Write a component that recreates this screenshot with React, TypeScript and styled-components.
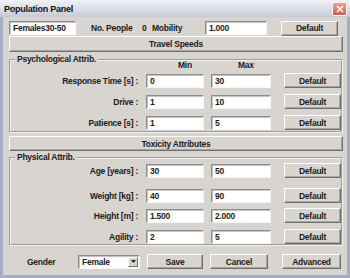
import React from "react";
import styled, { createGlobalStyle } from "styled-components";

const FONT = `"Liberation Sans", Arial, sans-serif`;
const FACE = "#d8d5d0";

const GlobalStyle = createGlobalStyle`
  html, body { margin: 0; padding: 0; background: ${FACE}; }
  body { width: 350px; height: 278px; overflow: hidden; }
  * { box-sizing: border-box; }
`;

const Window = styled.div`
  width: 350px;
  height: 278px;
  display: flex;
  flex-direction: column;
  font-family: ${FONT};
  font-size: 8.5px;
  letter-spacing: -0.25px;
  font-weight: bold;
  color: #1c1c1c;
`;

const TitleBar = styled.div`
  height: 17px;
  display: flex;
  align-items: center;
  justify-content: space-between;
  padding: 0 3px 0 4px;
  background: linear-gradient(#f1f2f6, #d3d7e1 70%, #c3c9d6);
  font-size: 9px;
  color: #111;
`;

const CloseButton = styled.div`
  width: 15px;
  height: 14px;
  border: 1px solid #f4f4f4;
  border-radius: 2px;
  background: linear-gradient(#e8a596, #cf5f49);
  display: flex;
  align-items: center;
  justify-content: center;
`;

const Frame = styled.div`
  flex: 1;
  display: flex;
  flex-direction: column;
  border: 3px solid #a6aec6;
  border-top: 0;
  background: ${FACE};
  padding: 3px 4px 0 6px;
`;

const Row = styled.div<{ $h?: number; $mt?: number }>`
  display: flex;
  align-items: center;
  height: ${(p) => p.$h ?? 15}px;
  margin-top: ${(p) => p.$mt ?? 0}px;
  flex-shrink: 0;
`;

const Text = styled.span<{ $ml?: number; $w?: number }>`
  margin-left: ${(p) => p.$ml ?? 0}px;
  ${(p) => (p.$w ? `width: ${p.$w}px;` : "")}
  white-space: nowrap;
`;

const TextBox = styled.input<{ $w: number; $ml?: number }>`
  width: ${(p) => p.$w}px;
  height: 14px;
  margin: 0 0 0 ${(p) => p.$ml ?? 0}px;
  padding: 0 3px;
  border: 1px solid;
  border-color: #8c8c8c #f6f6f6 #f6f6f6 #8c8c8c;
  box-shadow: inset 1px 1px 0 #c4c4c4;
  background: #fff;
  font-family: ${FONT};
  font-size: 8.5px;
  letter-spacing: -0.25px;
  font-weight: bold;
  color: #1c1c1c;
  outline: none;
`;

const Button = styled.button<{ $w?: number; $ml?: number; $h?: number }>`
  width: ${(p) => (p.$w ? `${p.$w}px` : "100%")};
  height: ${(p) => p.$h ?? 15}px;
  margin: 0 0 0 ${(p) => p.$ml ?? 0}px;
  padding: 0;
  background: ${FACE};
  border: 1px solid;
  border-color: #fdfdfd #6f6f6f #6f6f6f #fdfdfd;
  box-shadow: inset -1px -1px 0 #a9a6a1;
  font-family: ${FONT};
  font-size: 8.5px;
  letter-spacing: -0.25px;
  font-weight: bold;
  color: #1c1c1c;
  flex-shrink: 0;
`;

const Group = styled.fieldset<{ $mt?: number; $pb?: number }>`
  margin: ${(p) => p.$mt ?? 0}px 0 0 0;
  padding: 0 0 ${(p) => p.$pb ?? 0}px 0;
  border: 2px groove #f2f0ec;
  min-width: 0;
  flex-shrink: 0;
`;

const Legend = styled.legend`
  margin-left: 4px;
  padding: 0 2px;
  font-size: 8.5px;
  line-height: 9px;
`;

const Label = styled.span`
  width: 127px;
  text-align: right;
  white-space: nowrap;
`;

const Combo = styled.div`
  position: relative;
  width: 62px;
  height: 14px;
  margin-left: 21px;
  flex-shrink: 0;
`;

const ComboSelect = styled.select`
  width: 100%;
  height: 100%;
  margin: 0;
  padding: 0 0 0 3px;
  appearance: none;
  border: 1px solid;
  border-color: #8c8c8c #f6f6f6 #f6f6f6 #8c8c8c;
  box-shadow: inset 1px 1px 0 #c4c4c4;
  background: #fff;
  font-family: ${FONT};
  font-size: 8.5px;
  letter-spacing: -0.25px;
  font-weight: bold;
  color: #1c1c1c;
  outline: none;
`;

const ComboArrow = styled.span`
  position: absolute;
  right: 2px;
  top: 2px;
  width: 10px;
  height: 10px;
  background: ${FACE};
  border: 1px solid;
  border-color: #fdfdfd #6f6f6f #6f6f6f #fdfdfd;
  display: flex;
  align-items: center;
  justify-content: center;
  pointer-events: none;
`;

type Field = { label: string; min: string; max: string; mt: number };

const psychFields: Field[] = [
  { label: "Response Time [s] :", min: "0", max: "30", mt: 4 },
  { label: "Drive :", min: "1", max: "10", mt: 6 },
  { label: "Patience [s] :", min: "1", max: "5", mt: 6 },
];

const physFields: Field[] = [
  { label: "Age [years] :", min: "30", max: "50", mt: 1 },
  { label: "Weight [kg] :", min: "40", max: "90", mt: 10 },
  { label: "Height [m] :", min: "1.500", max: "2.000", mt: 5 },
  { label: "Agility :", min: "2", max: "5", mt: 6 },
];

const FieldRow: React.FC<{ f: Field }> = ({ f }) => (
  <Row $mt={f.mt}>
    <Label>{f.label}</Label>
    <TextBox $w={58} $ml={8} defaultValue={f.min} />
    <TextBox $w={60} $ml={7} defaultValue={f.max} />
    <Button $w={57} $ml={13}>Default</Button>
  </Row>
);

export default function App() {
  return (
    <>
      <GlobalStyle />
      <Window>
        <TitleBar>
          <span>Population Panel</span>
          <CloseButton>
            <svg width="8" height="8" viewBox="0 0 8 8">
              <path d="M1 1 L7 7 M7 1 L1 7" stroke="#fff" strokeWidth="1.6" />
            </svg>
          </CloseButton>
        </TitleBar>
        <Frame>
          <Row $h={16}>
            <TextBox $w={67} defaultValue="Females30-50" />
            <Text $ml={15} $w={51}>No. People</Text>
            <Text $w={10}>0</Text>
            <Text $w={53}>Mobility</Text>
            <TextBox $w={62} defaultValue="1.000" />
            <Button $w={57} $ml={14}>Default</Button>
          </Row>
          <Button $h={16} style={{ marginTop: 0 }}>Travel Speeds</Button>
          <Group $mt={3} $pb={1}>
            <Legend>Psychological Attrib.</Legend>
            <Row $h={8} $mt={-3}>
              <Text $ml={167} $w={60}>Min</Text>
              <Text>Max</Text>
            </Row>
            {psychFields.map((f) => (
              <FieldRow key={f.label} f={f} />
            ))}
          </Group>
          <Button $h={15} style={{ marginTop: 3 }}>Toxicity Attributes</Button>
          <Group $mt={2} $pb={0}>
            <Legend>Physical Attrib.</Legend>
            {physFields.map((f) => (
              <FieldRow key={f.label} f={f} />
            ))}
          </Group>
          <Row $mt={8}>
            <Text $ml={18} $w={30}>Gender</Text>
            <Combo>
              <ComboSelect defaultValue="Female">
                <option>Female</option>
                <option>Male</option>
              </ComboSelect>
              <ComboArrow>
                <svg width="5" height="3" viewBox="0 0 5 3">
                  <path d="M0 0 H5 L2.5 3 Z" fill="#222" />
                </svg>
              </ComboArrow>
            </Combo>
            <Button $w={56} $ml={7}>Save</Button>
            <Button $w={58} $ml={7}>Cancel</Button>
            <Button $w={59} $ml={14}>Advanced</Button>
          </Row>
        </Frame>
      </Window>
    </>
  );
}
